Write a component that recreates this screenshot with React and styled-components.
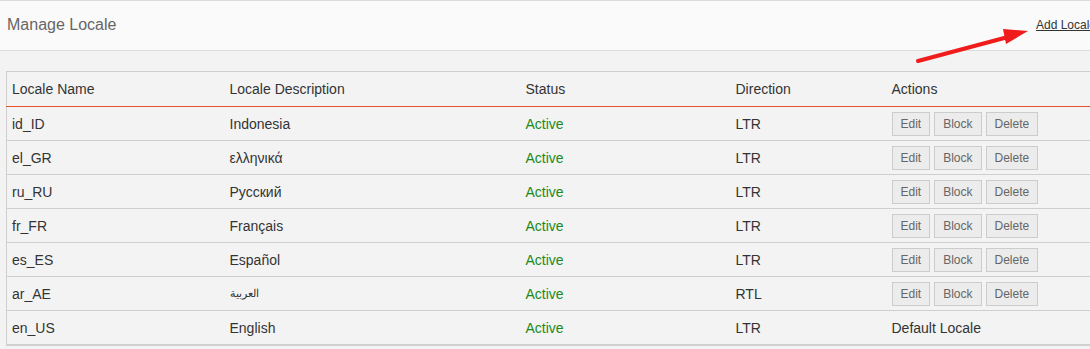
import React from 'react';
import styled, { createGlobalStyle } from 'styled-components';

const GlobalStyle = createGlobalStyle`
  html, body {
    margin: 0;
    padding: 0;
    background: #f3f3f3;
    overflow: hidden;
  }
  body {
    font-family: "Liberation Sans", Arial, sans-serif;
    color: #333;
  }
`;

const locales = [
  { name: 'id_ID', desc: 'Indonesia', dir: 'LTR' },
  { name: 'el_GR', desc: 'ελληνικά', dir: 'LTR' },
  { name: 'ru_RU', desc: 'Русский', dir: 'LTR' },
  { name: 'fr_FR', desc: 'Français', dir: 'LTR' },
  { name: 'es_ES', desc: 'Español', dir: 'LTR' },
  { name: 'ar_AE', desc: 'العربية', dir: 'RTL', small: true },
  { name: 'en_US', desc: 'English', dir: 'LTR', isDefault: true },
];

export default function App() {
  return (
    <Page>
      <GlobalStyle />
      <Header>
        <Title>Manage Locale</Title>
        <AddLink href="#">Add Locale</AddLink>
      </Header>

      <Content>
        <Table>
          <colgroup>
            <col style={{ width: 218 }} />
            <col style={{ width: 296 }} />
            <col style={{ width: 210 }} />
            <col style={{ width: 156 }} />
            <col />
          </colgroup>
          <thead>
            <tr>
              <Th>Locale Name</Th>
              <Th>Locale Description</Th>
              <Th>Status</Th>
              <Th>Direction</Th>
              <Th>Actions</Th>
            </tr>
          </thead>
          <tbody>
            {locales.map((l, i) => (
              <Row key={l.name} last={i === locales.length - 1}>
                <Td>{l.name}</Td>
                <Td small={l.small}>{l.desc}</Td>
                <Status>Active</Status>
                <Td>{l.dir}</Td>
                <Td>
                  {l.isDefault ? (
                    'Default Locale'
                  ) : (
                    <Actions>
                      <Btn>Edit</Btn>
                      <Btn>Block</Btn>
                      <Btn>Delete</Btn>
                    </Actions>
                  )}
                </Td>
              </Row>
            ))}
          </tbody>
        </Table>
      </Content>

      <Arrow width="130" height="45" viewBox="0 0 130 45">
        <line x1="5" y1="35" x2="95" y2="11" stroke="#f01c1c" strokeWidth="4" strokeLinecap="round" />
        <polygon points="90,3 115,5 93,18" fill="#f01c1c" />
      </Arrow>
    </Page>
  );
}

const Page = styled.div`
  position: relative;
  width: 1100px;
  min-height: 349px;
  background: #f3f3f3;
`;

const Header = styled.div`
  height: 49px;
  border-top: 1px solid #dcdcdc;
  border-bottom: 1px solid #dcdcdc;
  background: #fafafa;
  display: flex;
  align-items: center;
  justify-content: space-between;
  padding: 0 4px 0 7px;
`;

const Title = styled.h1`
  margin: 0;
  font-size: 16px;
  font-weight: normal;
  color: #666;
  margin-top: -2px;
`;

const AddLink = styled.a`
  font-size: 12px;
  color: #333;
  text-decoration: underline;
  margin-top: -1px;
`;

const Content = styled.div`
  padding: 20px 0 0 6px;
`;

const Table = styled.table`
  width: 100%;
  table-layout: fixed;
  border-collapse: collapse;
  border: 1px solid #cfcfcf;
  border-bottom: none;
  background: #f3f3f3;
  font-size: 14px;
`;

const Th = styled.th`
  height: 34px;
  padding: 0 5px;
  text-align: left;
  font-weight: normal;
  color: #333;
  border-bottom: 1px solid #e8502a;
`;

const Row = styled.tr`
  border-bottom: ${(p) => (p.last ? '2px solid #d0d0d0' : '1px solid #cfcfcf')};
`;

const Td = styled.td`
  height: 33px;
  padding: 0 5px;
  color: #333;
  font-size: ${(p) => (p.small ? '11px' : '14px')};
  white-space: nowrap;
`;

const Status = styled(Td)`
  color: #1a8a1a;
`;

const Actions = styled.div`
  display: flex;
  gap: 4px;
`;

const Btn = styled.button`
  height: 24px;
  padding: 0 8px;
  border: 1px solid #cccccc;
  background: #ececec;
  color: #666;
  font-family: "Liberation Sans", Arial, sans-serif;
  font-size: 12px;
  cursor: pointer;
`;

const Arrow = styled.svg`
  position: absolute;
  left: 913px;
  top: 26px;
  pointer-events: none;
`;
